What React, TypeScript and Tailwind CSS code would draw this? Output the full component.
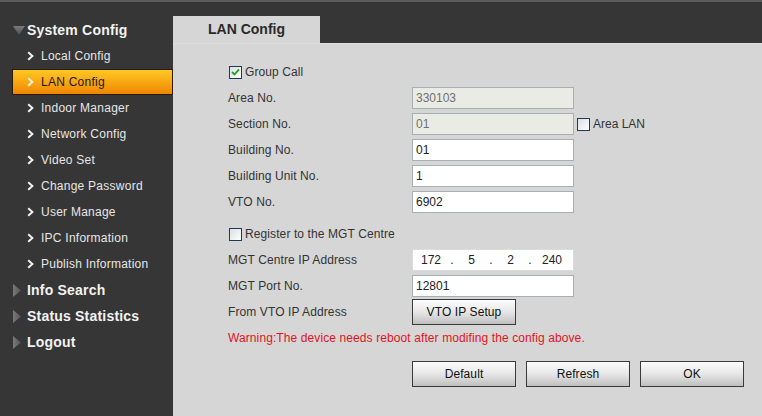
import React from "react";

const font = { fontFamily: '"Liberation Sans", Arial, sans-serif' };

function Chevron({ color = "#f0f0f0" }: { color?: string }) {
  return (
    <svg width="7" height="10" viewBox="0 0 7 10" className="shrink-0">
      <polyline points="1.2,1.2 5.4,5 1.2,8.8" fill="none" stroke={color} strokeWidth="2" />
    </svg>
  );
}

function TriDown() {
  return (
    <svg width="12" height="9" viewBox="0 0 12 9" className="shrink-0">
      <defs>
        <linearGradient id="gd" x1="0" y1="0" x2="0" y2="1">
          <stop offset="0" stopColor="#7a7a7a" />
          <stop offset="1" stopColor="#4e4e4e" />
        </linearGradient>
      </defs>
      <polygon points="0,0 12,0 6,9" fill="url(#gd)" />
    </svg>
  );
}

function TriRight() {
  return (
    <svg width="8" height="13" viewBox="0 0 8 13" className="shrink-0">
      <defs>
        <linearGradient id="gr" x1="0" y1="0" x2="1" y2="0">
          <stop offset="0" stopColor="#7a7a7a" />
          <stop offset="1" stopColor="#555" />
        </linearGradient>
      </defs>
      <polygon points="0,0 8,6.5 0,13" fill="url(#gr)" />
    </svg>
  );
}

function CheckBox({ checked }: { checked?: boolean }) {
  return (
    <div className="w-[13px] h-[13px] border border-[#1c3b5c] bg-gradient-to-br from-[#dcdfe4] to-[#ffffff] flex items-center justify-center shrink-0">
      {checked && (
        <svg width="9" height="8" viewBox="0 0 9 8">
          <polyline points="1,4 3.5,6.5 8,1.3" fill="none" stroke="#21a121" strokeWidth="1.8" />
        </svg>
      )}
    </div>
  );
}

function Input({ value, disabled }: { value: string; disabled?: boolean }) {
  return (
    <div
      className={
        "w-[162px] h-[22px] border border-[#a9aeb3] flex items-center pl-[3px] text-[12px] " +
        (disabled ? "bg-[#ebebe5] text-[#707070]" : "bg-white text-[#222]")
      }
    >
      {value}
    </div>
  );
}

function Btn({ label }: { label: string }) {
  return (
    <div className="w-[104px] h-[26px] border border-[#3a3a3a] bg-gradient-to-b from-[#fdfdfd] via-[#e6e6e6] to-[#c0c0c0] flex items-center justify-center text-[12px] tracking-[0.1px] text-[#111]">
      {label}
    </div>
  );
}

const subItems = [
  "Local Config",
  "LAN Config",
  "Indoor Manager",
  "Network Config",
  "Video Set",
  "Change Password",
  "User Manage",
  "IPC Information",
  "Publish Information",
];

function Row({ label, children }: { label: string; children?: React.ReactNode }) {
  return (
    <div className="flex items-center h-[26px]">
      <div className="w-[184px] text-[12px] tracking-[0.1px] text-[#333]">{label}</div>
      {children}
    </div>
  );
}

export default function App() {
  return (
    <div className="w-[762px] h-[416px] bg-[#363636] flex flex-col overflow-hidden" style={font}>
      <div className="h-[2px] bg-[#5c5c5c] shrink-0" />
      <div className="flex flex-1 min-h-0">
        {/* Sidebar */}
        <div className="w-[173px] shrink-0 pt-[15px] flex flex-col">
          <div className="h-[26px] flex items-center pl-[13px] gap-[2px]">
            <TriDown />
            <span className="text-[14px] font-bold tracking-[0.2px] text-[#f2f2f2]">System Config</span>
          </div>
          {subItems.map((s) =>
            s === "LAN Config" ? (
              <div
                key={s}
                className="h-[26px] ml-[12px] border border-[#2a1c00] bg-gradient-to-b from-[#ffc823] to-[#ef8500] flex items-center pl-[14px] gap-[7px]"
              >
                <Chevron color="#fff3d0" />
                <span className="text-[12px] tracking-[0.25px] text-[#1a1a1a]">{s}</span>
              </div>
            ) : (
              <div key={s} className="h-[26px] flex items-center pl-[27px] gap-[7px]">
                <Chevron />
                <span className="text-[12px] tracking-[0.25px] text-[#e6e6e6]">{s}</span>
              </div>
            )
          )}
          {["Info Search", "Status Statistics", "Logout"].map((s) => (
            <div key={s} className="h-[26px] flex items-center pl-[13px] gap-[6px]">
              <TriRight />
              <span className="text-[14px] font-bold tracking-[0.2px] text-[#f2f2f2]">{s}</span>
            </div>
          ))}
        </div>

        {/* Main */}
        <div className="flex-1 flex flex-col pt-[14px]">
          <div className="flex h-[27px] shrink-0">
            <div className="w-[147px] bg-[#d6d6d6] flex items-center pl-[35px] text-[14px] font-bold text-[#2a2a2a]">
              LAN Config
            </div>
            <div className="flex-1" />
          </div>
          <div className="flex-1 bg-[#d6d6d6] border-t border-[#dedede] pl-[55px] pt-[15px]">
            <div className="flex items-center h-[26px] gap-[3px] pl-[1px]">
              <CheckBox checked />
              <span className="text-[12px] tracking-[0.1px] text-[#333]">Group Call</span>
            </div>
            <Row label="Area No.">
              <Input value="330103" disabled />
            </Row>
            <Row label="Section No.">
              <Input value="01" disabled />
              <div className="ml-[3px] flex items-center gap-[3px]">
                <CheckBox />
                <span className="text-[12px] text-[#333]">Area LAN</span>
              </div>
            </Row>
            <Row label="Building No.">
              <Input value="01" />
            </Row>
            <Row label="Building Unit No.">
              <Input value="1" />
            </Row>
            <Row label="VTO No.">
              <Input value="6902" />
            </Row>
            <div className="flex items-center h-[26px] gap-[3px] pl-[1px] mt-[6px]">
              <CheckBox />
              <span className="text-[12px] tracking-[0.1px] text-[#333]">Register to the MGT Centre</span>
            </div>
            <Row label="MGT Centre IP Address">
              <div className="w-[162px] h-[22px] border border-[#dcdcdc] bg-white flex items-center text-[12px] text-[#222]">
                <span className="w-[36px] text-center">172</span>
                <span className="w-[6px] text-center">.</span>
                <span className="w-[33px] text-center">5</span>
                <span className="w-[6px] text-center">.</span>
                <span className="w-[33px] text-center">2</span>
                <span className="w-[6px] text-center">.</span>
                <span className="w-[38px] text-center">240</span>
              </div>
            </Row>
            <Row label="MGT Port No.">
              <Input value="12801" />
            </Row>
            <Row label="From VTO IP Address">
              <Btn label="VTO IP Setup" />
            </Row>
            <div className="h-[26px] flex items-center text-[12px] tracking-[0.1px] text-[#e0141e]">
              Warning:The device needs reboot after modifing the config above.
            </div>
            <div className="flex gap-[10px] pl-[184px] mt-[10px]">
              <Btn label="Default" />
              <Btn label="Refresh" />
              <Btn label="OK" />
            </div>
          </div>
        </div>
      </div>
    </div>
  );
}
